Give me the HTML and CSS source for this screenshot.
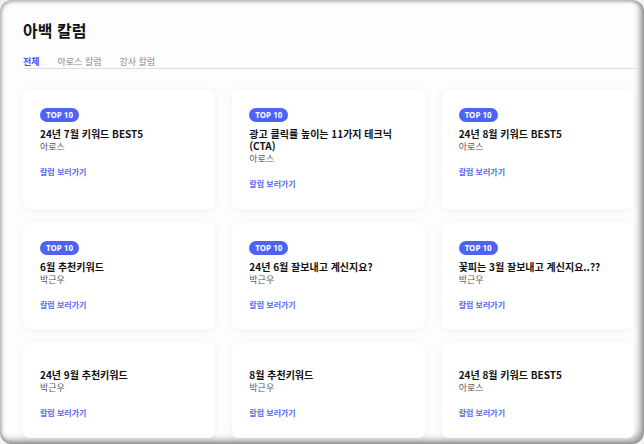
FILE: index.html
```html
<!DOCTYPE html>
<html lang="ko">
<head>
<meta charset="utf-8">
<title>아백 칼럼</title>
<link rel="stylesheet" href="styles.css">
</head>
<body>
<div class="frame">
  <h1 class="page-title">아백 칼럼</h1>
  <nav class="tabs">
    <span class="tab active">전체</span>
    <span class="tab">아로스 칼럼</span>
    <span class="tab">강사 칼럼</span>
  </nav>
  <div class="grid">
    <div class="card">
      <span class="badge">TOP 10</span>
      <div class="title">24년 7월 키워드 BEST5</div>
      <div class="author">아로스</div>
      <a class="more">칼럼 보러가기</a>
    </div>
    <div class="card">
      <span class="badge">TOP 10</span>
      <div class="title">광고 클릭률 높이는 11가지 테크닉<br>(CTA)</div>
      <div class="author">아로스</div>
      <a class="more">칼럼 보러가기</a>
    </div>
    <div class="card">
      <span class="badge">TOP 10</span>
      <div class="title">24년 8월 키워드 BEST5</div>
      <div class="author">아로스</div>
      <a class="more">칼럼 보러가기</a>
    </div>
    <div class="card">
      <span class="badge">TOP 10</span>
      <div class="title">6월 추천키워드</div>
      <div class="author">박근우</div>
      <a class="more">칼럼 보러가기</a>
    </div>
    <div class="card">
      <span class="badge">TOP 10</span>
      <div class="title">24년 6월 잘보내고 계신지요?</div>
      <div class="author">박근우</div>
      <a class="more">칼럼 보러가기</a>
    </div>
    <div class="card">
      <span class="badge">TOP 10</span>
      <div class="title">꽃피는 3월 잘보내고 계신지요..??</div>
      <div class="author">박근우</div>
      <a class="more">칼럼 보러가기</a>
    </div>
    <div class="card">
      <span class="spacer"></span>
      <div class="title">24년 9월 추천키워드</div>
      <div class="author">박근우</div>
      <a class="more">칼럼 보러가기</a>
    </div>
    <div class="card">
      <span class="spacer"></span>
      <div class="title">8월 추천키워드</div>
      <div class="author">박근우</div>
      <a class="more">칼럼 보러가기</a>
    </div>
    <div class="card">
      <span class="spacer"></span>
      <div class="title">24년 8월 키워드 BEST5</div>
      <div class="author">아로스</div>
      <a class="more">칼럼 보러가기</a>
    </div>
  </div>
</div>
</body>
</html>
```

FILE: styles.css
```css
html, body {
  margin: 0;
  padding: 0;
  background: #f2f2f2;
}

body {
  font-family: "Noto Sans CJK KR", "Noto Sans", sans-serif;
  color: #111;
}

.frame {
  box-sizing: border-box;
  width: 644px;
  height: 444px;
  padding: 20px 8px 0 23px;
  border-radius: 12px;
  overflow: hidden;
  background: #fdfdfd;
  box-shadow: inset 1px 1px 4px rgba(0, 0, 0, 0.4), inset -4px -4px 6px rgba(0, 0, 0, 0.38);
}

.page-title {
  margin: 0;
  font-size: 16px;
  line-height: 20px;
  font-weight: 700;
  color: #111;
}

.tabs {
  display: flex;
  gap: 18px;
  margin-top: 16px;
  border-bottom: 1px solid #dedede;
}

.tab {
  font-size: 9px;
  line-height: 11px;
  padding-bottom: 1px;
  color: #8a8a8a;
}

.tab.active {
  color: #4656ef;
  font-weight: 700;
}

.grid {
  display: grid;
  grid-template-columns: repeat(3, 1fr);
  column-gap: 17px;
  row-gap: 14px;
  width: 611px;
  margin-top: 21px;
}

.card {
  display: flex;
  flex-direction: column;
  align-items: flex-start;
  padding: 18px 17px 18px;
  background: #fff;
  border-radius: 7px;
  box-shadow: 0 1px 8px rgba(0, 0, 0, 0.06);
}

.badge {
  display: inline-block;
  height: 14px;
  line-height: 14px;
  padding: 0 6px;
  border-radius: 7px;
  background: #4c63f6;
  color: #fff;
  font-family: "Noto Sans", "Noto Sans CJK KR", sans-serif;
  font-size: 8px;
  font-weight: 700;
  margin-bottom: 6px;
}

.spacer {
  display: block;
  height: 8px;
}

.title {
  font-size: 10px;
  line-height: 12px;
  font-weight: 700;
  color: #111;
}

.author {
  font-size: 9px;
  line-height: 13.5px;
  color: #5a5a5a;
}

.more {
  margin-top: 11.5px;
  font-size: 8px;
  line-height: 13.5px;
  font-weight: 700;
  color: #5569f2;
}
```
